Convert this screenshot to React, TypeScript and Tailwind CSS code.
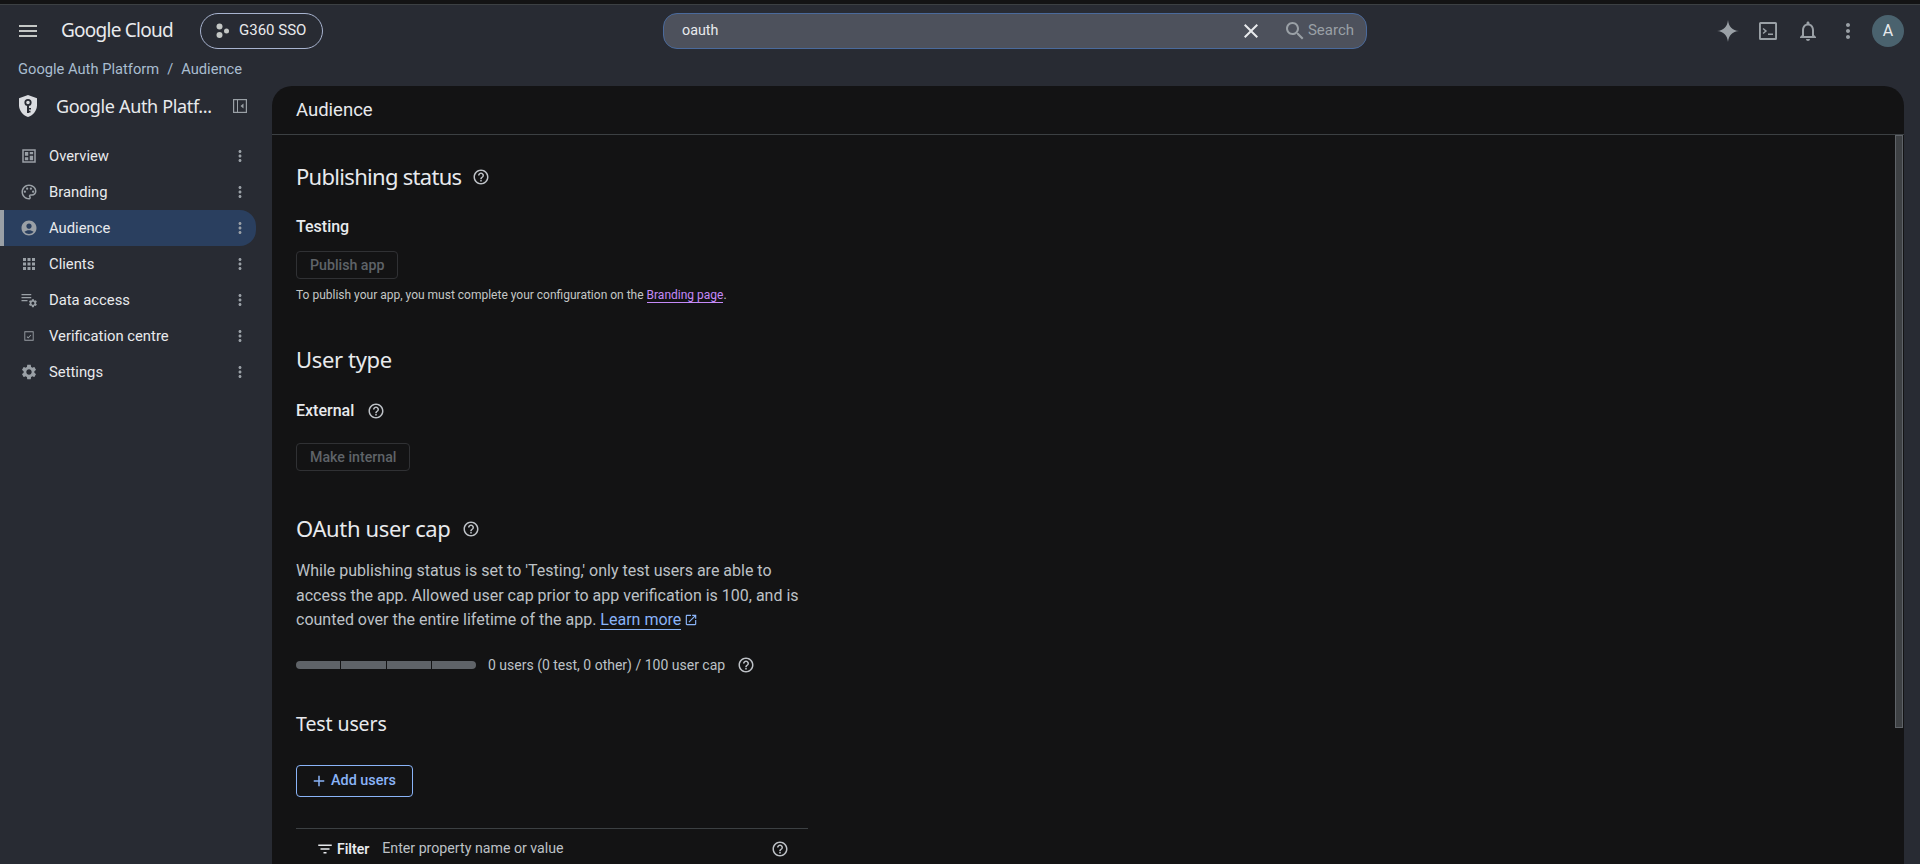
import type { ReactNode } from "react";

const help =
  "M11 18h2v-2h-2v2zm1-16C6.48 2 2 6.48 2 12s4.48 10 10 10 10-4.48 10-10S17.52 2 12 2zm0 18c-4.41 0-8-3.59-8-8s3.59-8 8-8 8 3.59 8 8-3.59 8-8 8zm0-14c-2.21 0-4 1.79-4 4h2c0-1.1.9-2 2-2s2 .9 2 2c0 2-3 1.75-3 5h2c0-2.25 3-2.5 3-5 0-2.21-1.79-4-4-4z";
const moreVert =
  "M12 8c1.1 0 2-.9 2-2s-.9-2-2-2-2 .9-2 2 .9 2 2 2zm0 2c-1.1 0-2 .9-2 2s.9 2 2 2 2-.9 2-2-.9-2-2-2zm0 6c-1.1 0-2 .9-2 2s.9 2 2 2 2-.9 2-2-.9-2-2-2z";
const gear =
  "M19.14 12.94c.04-.3.06-.61.06-.94 0-.32-.02-.64-.07-.94l2.03-1.58c.18-.14.23-.41.12-.61l-1.92-3.32c-.12-.22-.37-.29-.59-.22l-2.39.96c-.5-.38-1.03-.7-1.62-.94l-.36-2.54c-.04-.24-.24-.41-.48-.41h-3.84c-.24 0-.43.17-.47.41l-.36 2.54c-.59.24-1.13.57-1.62.94l-2.39-.96c-.22-.08-.47 0-.59.22L2.74 8.87c-.12.21-.08.47.12.61l2.03 1.58c-.05.3-.09.63-.09.94s.02.64.07.94l-2.03 1.58c-.18.14-.23.41-.12.61l1.92 3.32c.12.22.37.29.59.22l2.39-.96c.5.38 1.03.7 1.62.94l.36 2.54c.05.24.24.41.48.41h3.84c.24 0 .44-.17.47-.41l.36-2.54c.59-.24 1.13-.56 1.62-.94l2.39.96c.22.08.47 0 .59-.22l1.92-3.32c.12-.22.07-.47-.12-.61l-2.01-1.58zM12 15.6c-1.98 0-3.6-1.62-3.6-3.6s1.62-3.6 3.6-3.6 3.6 1.62 3.6 3.6-1.62 3.6-3.6 3.6z";

function Icon({ className, children }: { className?: string; children: ReactNode }) {
  return (
    <svg viewBox="0 0 24 24" fill="currentColor" aria-hidden className={className}>
      {children}
    </svg>
  );
}

function HelpIcon({ className }: { className?: string }) {
  return (
    <Icon className={className ?? "size-[18px] text-[#bdc1c6]"}>
      <path d={help} />
    </Icon>
  );
}

const navItems: { label: string; active?: boolean; icon: ReactNode }[] = [
  {
    label: "Overview",
    icon: (
      <path d="M3 3h18v18H3V3zm2 2v14h14V5H5zm1.5 1.5h4.5v5H6.500v-5zm6.500 0h4.500v3H13v-3zm-6.500 7h4.500v4H6.500v-4zm6.500-2h4.500v6H13v-6z" fillRule="evenodd" />
    ),
  },
  {
    label: "Branding",
    icon: (
      <>
        <path d="M12 22C6.49 22 2 17.51 2 12S6.49 2 12 2s10 4.04 10 9c0 3.31-2.69 6-6 6h-1.77c-.28 0-.5.22-.5.5 0 .12.05.23.13.33.41.47.64 1.06.64 1.67 0 1.38-1.12 2.5-2.5 2.500zm0-18c-4.410 0-8 3.590-8 8s3.590 8 8 8c.28 0 .5-.22.5-.5 0-.16-.08-.28-.14-.35-.41-.46-.63-1.050-.63-1.650 0-1.380 1.120-2.500 2.500-2.500H16c2.210 0 4-1.790 4-4 0-3.860-3.590-7-8-7z" />
        <circle cx="6.500" cy="11.500" r="1.500" />
        <circle cx="9.500" cy="7.500" r="1.500" />
        <circle cx="14.500" cy="7.500" r="1.500" />
        <circle cx="17.500" cy="11.500" r="1.500" />
      </>
    ),
  },
  {
    label: "Audience",
    active: true,
    icon: (
      <path d="M12 2C6.48 2 2 6.48 2 12s4.48 10 10 10 10-4.480 10-10S17.520 2 12 2zm0 4c1.930 0 3.500 1.570 3.500 3.500S13.930 13 12 13s-3.500-1.570-3.500-3.500S10.070 6 12 6zm0 14c-2.030 0-4.430-.82-6.140-2.880C7.550 15.800 9.680 15 12 15s4.450.8 6.140 2.120C16.430 19.180 14.030 20 12 20z" />
    ),
  },
  {
    label: "Clients",
    icon: (
      <path d="M4 4h4v4H4V4zm6 0h4v4h-4V4zm6 0h4v4h-4V4zM4 10h4v4H4v-4zm6 0h4v4h-4v-4zm6 0h4v4h-4v-4zM4 16h4v4H4v-4zm6 0h4v4h-4v-4zm6 0h4v4h-4v-4z" />
    ),
  },
  {
    label: "Data access",
    icon: (
      <>
        <path d="M2 4h13v1.800H2V4zm0 4h13v1.800H2V8zm0 4h8v1.800H2V12z" />
        <g transform="translate(10.500 9.500) scale(.56)">
          <path d={gear} />
        </g>
      </>
    ),
  },
  {
    label: "Verification centre",
    icon: (
      <path
        fillRule="evenodd"
        d="M5.800 5.800h12.400v12.400H5.800V5.800zm1.200 1.200v10h10V7H7zm1.900 6.200.8-.8 1.200 1.200 3.300-3.300.8.8-4.100 4.100-2-2z"
      />
    ),
  },
  { label: "Settings", icon: <path d={gear} /> },
];

function NavRow({ label, active, icon }: { label: string; active?: boolean; icon: ReactNode }) {
  return (
    <div
      className={`flex h-9 w-64 items-center rounded-r-2xl border-l-4 pl-4 pr-[7px] ${
        active ? "border-[#9aa0a6] bg-[#2a3f5f]" : "border-transparent"
      }`}
    >
      <Icon className="size-[18px] shrink-0 text-[#9aa0a6]">{icon}</Icon>
      <span className="ml-[11px] flex-1 text-[14.8px] text-[#e8eaed]">{label}</span>
      <Icon className="size-[18px] text-[#9aa0a6]">
        <path d={moreVert} />
      </Icon>
    </div>
  );
}

function DisabledButton({ children }: { children: ReactNode }) {
  return (
    <div className="inline-flex h-7 items-center rounded border border-[#303134] px-[13px] pt-px text-[14.2px] font-medium text-[#5f6368]">
      {children}
    </div>
  );
}

const heading = "font-['Noto_Sans',sans-serif] text-[22px] leading-7 text-[#e8eaed]";

export default function App() {
  return (
    <div className="flex h-[864px] flex-col overflow-hidden bg-[#282b33] font-['Roboto',sans-serif] text-[#e8eaed]">
      <div className="h-[5px] shrink-0 border-b border-[#3c4043] bg-[#131314]" />

      <header className="flex h-[50px] shrink-0 items-center pb-[3px] pt-[4px]">
        <Icon className="ml-4 size-6 text-[#c4c7c5]">
          <path d="M3 18h18v-2H3v2zm0-5h18v-2H3v2zm0-7v2h18V6H3z" />
        </Icon>
        <span className="ml-[21px] w-[139px] font-['Noto_Sans',sans-serif] text-[19px] tracking-[-0.75px] text-[#e8eaed]">
          Google Cloud
        </span>
        <div className="flex h-9 w-[123px] items-center rounded-[18px] border border-[#a8b4d0] pl-[13px]">
          <svg viewBox="0 0 16 16" className="size-4 text-[#c4c7c5]" fill="currentColor" aria-hidden>
            <circle cx="5.500" cy="3.500" r="3" />
            <circle cx="5.500" cy="12" r="3" />
            <circle cx="12.500" cy="8" r="2.500" />
          </svg>
          <span className="ml-[9px] text-[15px]">G360 SSO</span>
        </div>

        <div className="ml-[340px] flex h-9 w-[704px] items-center rounded-[14px] border border-[#4a6a9c] bg-[#4d515c] pl-[18px] pr-3">
          <span className="flex-1 text-[14.3px] text-[#e8eaed]">oauth</span>
          <Icon className="size-6 text-[#e8eaed]">
            <path d="M19 6.410 17.590 5 12 10.590 6.410 5 5 6.410 10.590 12 5 17.590 6.410 19 12 13.410 17.590 19 19 17.590 13.410 12z" />
          </Icon>
          <Icon className="ml-5 size-6 text-[#9aa0a6]">
            <path d="M15.500 14h-.79l-.28-.27C15.410 12.590 16 11.110 16 9.500 16 5.910 13.090 3 9.500 3S3 5.910 3 9.500 5.910 16 9.500 16c1.610 0 3.090-.59 4.230-1.570l.27.28v.79l5 4.990L20.490 19l-4.990-5zm-6 0C7.010 14 5 11.990 5 9.500S7.010 5 9.500 5 14 7.010 14 9.500 11.990 14 9.500 14z" />
          </Icon>
          <span className="ml-[1px] text-[15px] text-[#9aa0a6]">Search</span>
        </div>

        <div className="ml-auto flex items-center pr-4 text-[#9aa0a6]">
          <Icon className="size-6">
            <path d="M12 1c.6 6.600 4.400 10.400 11 11-6.600.6-10.400 4.400-11 11-.6-6.600-4.400-10.400-11-11 6.600-.6 10.400-4.400 11-11z" />
          </Icon>
          <Icon className="ml-4 size-6">
            <path
              fillRule="evenodd"
              d="M4.500 3h15A1.500 1.500 0 0 1 21 4.500v15a1.500 1.500 0 0 1-1.500 1.500h-15A1.500 1.500 0 0 1 3 19.500v-15A1.500 1.500 0 0 1 4.500 3zM4.900 4.900v14.200h14.200V4.900H4.900zM7.500 9l3.600 3-3.600 3-.9-1.100L8.900 12 6.600 10.100 7.500 9zM12 14.500h5V16h-5v-1.500z"
            />
          </Icon>
          <Icon className="ml-4 size-6">
            <path d="M12 22c1.100 0 2-.9 2-2h-4c0 1.100.9 2 2 2zm6-6v-5c0-3.070-1.630-5.640-4.500-6.320V4c0-.83-.67-1.500-1.500-1.500s-1.500.67-1.500 1.500v.68C7.640 5.360 6 7.920 6 11v5l-2 2v1h16v-1l-2-2zm-2 1H8v-6c0-2.480 1.510-4.500 4-4.500s4 2.020 4 4.500v6z" />
          </Icon>
          <Icon className="ml-4 size-6">
            <path d={moreVert} />
          </Icon>
          <div className="ml-3 flex size-8 items-center justify-center rounded-full bg-[#4a626e] text-[16px] text-[#e8eaed]">
            A
          </div>
        </div>
      </header>

      <div className="flex h-[31px] shrink-0 items-center pb-[2px] pl-[18px] text-[14.7px] text-[#a9bdd0]">
        <span>Google Auth Platform</span>
        <span className="mx-2">/</span>
        <span>Audience</span>
      </div>

      <div className="flex min-h-0 flex-1">
        <aside className="w-[272px] shrink-0">
          <div className="flex h-10 items-center pl-[16px] pr-[25px]">
            <svg viewBox="0 0 24 24" className="size-6 shrink-0 text-[#dadce0]" aria-hidden>
              <path
                fill="currentColor"
                d="M12 1 3 4.300v7c0 5.300 3.800 10 9 11.700 5.200-1.700 9-6.400 9-11.700v-7L12 1z"
              />
              <circle cx="12" cy="8.500" r="2.700" fill="none" stroke="#282b33" strokeWidth="1.800" />
              <path d="M11 11h2v8h-2zM13 14h2v1.600h-2zM13 16.800h1.500v1.600H13z" fill="#282b33" />
            </svg>
            <span className="ml-[16px] flex-1 font-['Noto_Sans',sans-serif] text-[18px] tracking-[-0.35px] text-[#e8eaed]">
              Google Auth Platf...
            </span>
            <svg viewBox="0 0 14 14" className="size-[14px] text-[#9aa0a6]" aria-hidden>
              <rect x=".6" y=".6" width="12.800" height="12.800" fill="none" stroke="currentColor" strokeWidth="1.200" />
              <path d="M4 1h1v12H4zM10.500 4.500v5L7.500 7z" fill="currentColor" />
            </svg>
          </div>
          <nav className="mt-[12px] flex flex-col">
            {navItems.map((item) => (
              <NavRow key={item.label} {...item} />
            ))}
          </nav>
        </aside>

        <main className="mr-4 flex min-w-0 flex-1 flex-col overflow-hidden rounded-t-[20px] bg-[#131314]">
          <div className="flex h-[49px] shrink-0 items-center border-b border-[#3c4043] pl-6 pt-[2px] text-[18.5px] text-[#e8eaed]">
            Audience
          </div>
          <div className="flex min-h-0 flex-1">
            <div className="min-w-0 flex-1 overflow-hidden pl-6 pt-[27px]">
              <section>
                <div className="flex items-center">
                  <h2 className={`${heading} tracking-[-0.7px]`}>Publishing status</h2>
                  <HelpIcon className="ml-[11px] mt-[2px] size-[18px] text-[#bdc1c6]" />
                </div>
                <p className="mt-[25px] text-[16px] font-medium leading-6">Testing</p>
                <div className="mt-[12px]">
                  <DisabledButton>Publish app</DisabledButton>
                </div>
                <p className="mt-[8px] text-[12px] leading-4 text-[#c4c7c5]">
                  To publish your app, you must complete your configuration on the{" "}
                  <a className="border-b border-[#c58af9] text-[#c58af9]">Branding page</a>.
                </p>
              </section>

              <section className="mt-[42px]">
                <h2 className={`${heading} tracking-[-0.35px]`}>User type</h2>
                <div className="mt-[26px] flex items-center">
                  <span className="text-[16px] font-medium leading-6">External</span>
                  <HelpIcon className="ml-[13px] size-[18px] text-[#bdc1c6]" />
                </div>
                <div className="mt-[20px]">
                  <DisabledButton>Make internal</DisabledButton>
                </div>
              </section>

              <section className="mt-[43px]">
                <div className="flex items-center">
                  <h2 className={`${heading} tracking-[-0.35px]`}>OAuth user cap</h2>
                  <HelpIcon className="ml-[11px] mt-[2px] size-[18px] text-[#bdc1c6]" />
                </div>
                <p className="mt-[17px] w-[512px] text-[16px] leading-[24.5px] text-[#bdc1c6]">
                  While publishing status is set to 'Testing,' only test users are able to access the
                  app. Allowed user cap prior to app verification is 100, and is counted over the
                  entire lifetime of the app.{" "}
                  <a className="border-b border-[#8ab4f8] text-[#8ab4f8]">Learn more</a>
                  <Icon className="ml-[3px] inline size-[14px] align-[-2px] text-[#8ab4f8]">
                    <path d="M19 19H5V5h7V3H5c-1.110 0-2 .9-2 2v14c0 1.100.89 2 2 2h14c1.100 0 2-.9 2-2v-7h-2v7zM14 3v2h3.590l-9.830 9.830 1.410 1.410L19 6.410V10h2V3h-7z" />
                  </Icon>
                </p>
                <div className="mt-[22px] flex items-center">
                  <div className="flex h-2 w-[180px] gap-px overflow-hidden rounded-full">
                    <div className="flex-1 bg-[#5f6368]" />
                    <div className="flex-1 bg-[#5f6368]" />
                    <div className="flex-1 bg-[#5f6368]" />
                    <div className="flex-1 bg-[#5f6368]" />
                  </div>
                  <span className="ml-3 text-[14px] text-[#bdc1c6]">
                    0 users (0 test, 0 other) / 100 user cap
                  </span>
                  <HelpIcon className="ml-3 size-[18px] text-[#bdc1c6]" />
                </div>
              </section>

              <section className="mt-[36px]">
                <h3 className="font-['Noto_Sans',sans-serif] text-[19.5px] leading-6 tracking-[-0.1px] text-[#e8eaed]">
                  Test users
                </h3>
                <button className="mt-[29px] flex h-8 w-[117px] items-center rounded border border-[#8ab4f8] pl-[13px] text-[14.4px] font-medium text-[#8ab4f8]">
                  <Icon className="mr-[3px] size-[18px]">
                    <path d="M19 13h-6v6h-2v-6H5v-2h6V5h2v6h6v2z" />
                  </Icon>
                  Add users
                </button>
                <div className="mt-[31px] flex h-10 w-[512px] items-center border-t border-[#3c4043] pl-[20px] pr-[19px] pt-[2px]">
                  <Icon className="size-[18px] text-[#e8eaed]">
                    <path d="M10 18h4v-2h-4v2zM3 6v2h18V6H3zm3 7h12v-2H6v2z" />
                  </Icon>
                  <span className="ml-[3px] text-[14px] font-semibold text-[#e8eaed]">Filter</span>
                  <span className="ml-[13px] flex-1 text-[14.2px] text-[#bdc1c6]">
                    Enter property name or value
                  </span>
                  <HelpIcon className="size-[18px] text-[#bdc1c6]" />
                </div>
              </section>
            </div>
            <div className="w-[9px] shrink-0 pr-px">
              <div className="h-[593px] border border-[#5f6368] bg-[#3e4144]" />
            </div>
          </div>
        </main>
      </div>
    </div>
  );
}
